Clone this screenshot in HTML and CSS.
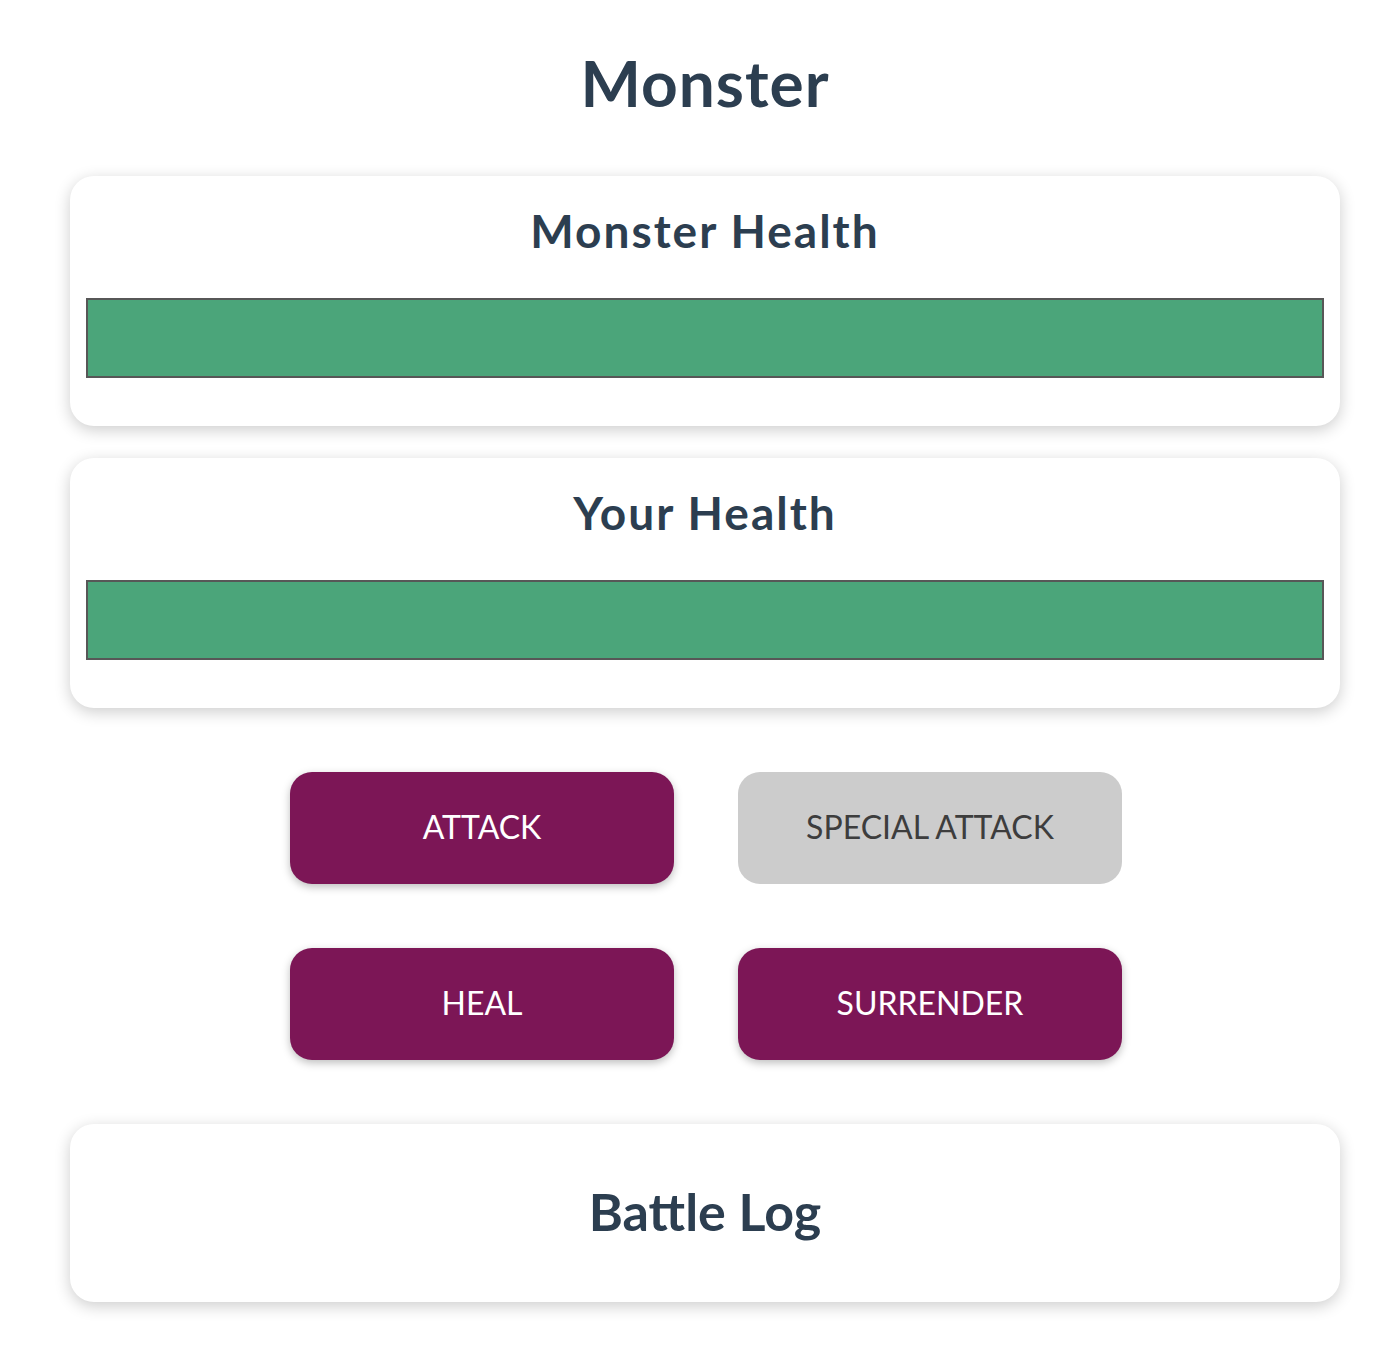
FILE: index.html
```html
<!DOCTYPE html>
<html lang="en">
<head>
<meta charset="utf-8">
<title>Monster</title>
<link rel="stylesheet" href="styles.css">
</head>
<body>
<div class="page">
  <h1 class="title">Monster</h1>
  <section class="card health">
    <h2 class="card-title">Monster Health</h2>
    <div class="healthbar"><div class="healthbar-value" style="width: 100%"></div></div>
  </section>
  <section class="card health">
    <h2 class="card-title">Your Health</h2>
    <div class="healthbar"><div class="healthbar-value" style="width: 100%"></div></div>
  </section>
  <section class="controls">
    <button class="btn">ATTACK</button>
    <button class="btn" disabled>SPECIAL ATTACK</button>
    <button class="btn">HEAL</button>
    <button class="btn">SURRENDER</button>
  </section>
  <section class="card log">
    <h2 class="log-title">Battle Log</h2>
  </section>
</div>
</body>
</html>
```
FILE: styles.css
```css
* { box-sizing: border-box; }
html, body { margin: 0; padding: 0; background: #ffffff; }
body {
  font-family: Lato, "Open Sans", "Liberation Sans", sans-serif;
  color: #2c3e50;
}
.page {
  width: 1270px;
  margin-left: 70px;
  padding-bottom: 44px;
}
.title {
  margin: 45px 0 54px;
  font-size: 64px;
  line-height: 1.2;
  font-weight: 700;
  letter-spacing: 1px;
  text-align: center;
}
.card {
  background: #ffffff;
  border-radius: 24px;
  box-shadow: 0 4px 16px rgba(0, 0, 0, 0.2);
}
.health {
  padding: 27px 16px 48px;
  margin-bottom: 32px;
}
.card-title {
  margin: 0 0 40px;
  font-size: 46px;
  line-height: 1.2;
  font-weight: 700;
  letter-spacing: 2px;
  text-align: center;
}
.healthbar {
  height: 80px;
  border: 2px solid #575757;
  background: #ffffff;
}
.healthbar-value {
  height: 100%;
  background: #4ba57a;
}
.controls {
  width: 832px;
  margin: 64px 0 64px 220px;
  display: flex;
  flex-wrap: wrap;
  gap: 64px;
}
.btn {
  width: 384px;
  height: 112px;
  padding: 0 0 4px;
  border: none;
  border-radius: 22px;
  background: #7c1656;
  color: #ffffff;
  font-family: Lato, "Open Sans", "Liberation Sans", sans-serif;
  font-size: 32px;
  font-weight: 400;
  box-shadow: 0 3px 8px rgba(0, 0, 0, 0.26);
  cursor: pointer;
}
.btn:disabled {
  background: #cccccc;
  color: #3d3d3d;
  box-shadow: none;
  cursor: not-allowed;
}
.log {
  padding: 56px 16px 59px;
}
.log-title {
  margin: 0;
  font-size: 52px;
  line-height: 1.2;
  font-weight: 700;
  text-align: center;
}
```
